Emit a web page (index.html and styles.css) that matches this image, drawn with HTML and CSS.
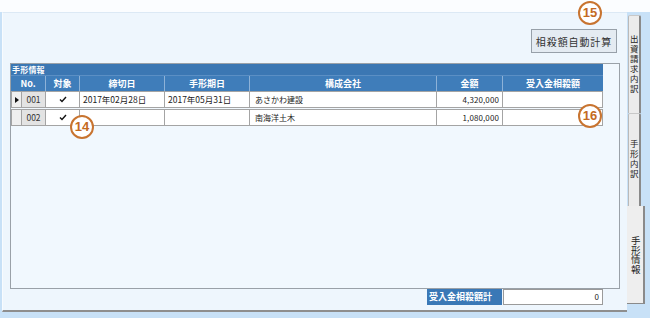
FILE: index.html
```html
<!DOCTYPE html>
<html lang="ja">
<head>
<meta charset="utf-8">
<link rel="stylesheet" href="styles.css">
</head>
<body>
<div class="top"></div>
<div class="window">
  <div class="panel">
    <div class="toolbar"><div class="btn">相殺額自動計算</div></div>
    <div class="frame">
      <div class="grid">
        <div class="caption">手形情報</div>
        <div class="hrow">
          <div class="hc w-no">No.</div>
          <div class="hc w-chk">対象</div>
          <div class="hc w-d">締切日</div>
          <div class="hc w-d">手形期日</div>
          <div class="hc w-co">構成会社</div>
          <div class="hc w-amt">金額</div>
          <div class="hc w-rcv last">受入金相殺額</div>
        </div>
        <div class="row">
          <div class="rh"><span class="arrow"></span></div>
          <div class="cell no">001</div>
          <div class="cell w-chk chk"><svg width="8" height="7" viewBox="0 0 8 7"><path d="M1 3.5 L3 5.5 L7 1" fill="none" stroke="#111" stroke-width="1.4"/></svg></div>
          <div class="cell w-d">2017年02月28日</div>
          <div class="cell w-d">2017年05月31日</div>
          <div class="cell w-co">あさかわ建設</div>
          <div class="cell w-amt num">4,320,000</div>
          <div class="cell w-rcv"></div>
        </div>
        <div class="row">
          <div class="rh"></div>
          <div class="cell no">002</div>
          <div class="cell w-chk chk"><svg width="8" height="7" viewBox="0 0 8 7"><path d="M1 3.5 L3 5.5 L7 1" fill="none" stroke="#111" stroke-width="1.4"/></svg></div>
          <div class="cell w-d"></div>
          <div class="cell w-d"></div>
          <div class="cell w-co">南海洋土木</div>
          <div class="cell w-amt num">1,080,000</div>
          <div class="cell w-rcv"></div>
        </div>
      </div>
    </div>
    <div class="totals">
      <div class="tlabel">受入金相殺額計</div>
      <div class="tinput">0</div>
    </div>
  </div>
  <div class="tabs">
    <div class="tab t1"><span class="tt">出資請求内訳</span></div>
    <div class="tab t2"><span class="tt">手形内訳</span></div>
    <div class="tab active"><span class="tt">手形情報</span></div>
  </div>
</div>
<div class="mark m14">14</div>
<div class="mark m15">15</div>
<div class="mark m16">16</div>
</body>
</html>
```
FILE: styles.css
```css
* { box-sizing: border-box; }
html, body { margin: 0; padding: 0; }
body {
  width: 650px;
  height: 318px;
  overflow: hidden;
  background: #fbfdff;
  font-family: "Noto Sans CJK JP", "Liberation Sans", sans-serif;
  position: relative;
}
.top { height: 12px; background: #fbfdff; }
.window {
  display: flex;
  height: 306px;
  background: #c8e1f7;
  padding: 0 5px 6px 2px;
}
.panel {
  width: 625px;
  height: 300px;
  background: #eef6fd;
  border-left: 1px solid #f8fbfe;
  border-top: 1px solid #dce9f5;
  border-bottom: 2px solid #8e8e8e;
  display: flex;
  flex-direction: column;
}
.toolbar {
  display: flex;
  justify-content: flex-end;
  padding: 16px 10px 0 0;
}
.btn {
  width: 86px;
  height: 24px;
  background: #e4ebf2;
  border: 1px solid #97a0a9;
  color: #333;
  font-size: 10px;
  letter-spacing: 0.9px;
  display: flex;
  align-items: center;
  justify-content: center;
}
.frame {
  margin: 10px 7px 0 7px;
  height: 226px;
  border: 1px solid #9aa1a8;
  background: #f1f8fe;
}
.grid { width: 592px; }
.caption {
  height: 11px;
  background: #3b77b3;
  color: #fff;
  font-size: 8px;
  font-weight: bold;
  line-height: 11px;
  padding-left: 1px;
  letter-spacing: 0.2px;
}
.hrow {
  display: flex;
  height: 16px;
  background: #3f7dba;
  border-top: 1px solid #5b8fc4;
}
.hc {
  color: #fff;
  font-size: 9px;
  font-weight: bold;
  text-align: center;
  line-height: 15px;
  border-right: 1px solid #8db2d8;
}
.hc.last { border-right: none; }
.w-no { width: 35px; }
.w-chk { width: 34px; }
.w-d { width: 85px; }
.w-co { width: 187px; }
.w-amt { width: 66px; }
.w-rcv { width: 100px; }
.row {
  display: flex;
  height: 17px;
  border-top: 1px solid #a4a4a4;
  border-bottom: 1px solid #a4a4a4;
  margin-bottom: 1px;
  background: #fff;
}
.rh {
  width: 11px;
  background: #efefef;
  border-left: 1px solid #a4a4a4;
  border-right: 1px solid #a4a4a4;
  display: flex;
  align-items: center;
  justify-content: center;
}
.arrow {
  width: 0;
  height: 0;
  border-left: 4px solid #111;
  border-top: 3px solid transparent;
  border-bottom: 3px solid transparent;
}
.cell {
  border-right: 1px solid #a4a4a4;
  font-size: 8.5px;
  color: #222;
  line-height: 15px;
  padding-left: 3px;
  white-space: nowrap;
  overflow: hidden;
}
.cell.no {
  width: 24px;
  background: #e3e3e3;
  text-align: center;
  padding-left: 0;
  color: #333;
}
.cell.chk {
  display: flex;
  align-items: center;
  justify-content: center;
  padding-left: 0;
}
.cell.w-co { padding-left: 5px; font-size: 8px; }
.cell.num {
  text-align: right;
  padding-left: 0;
  padding-right: 3px;
  font-size: 8px;
  letter-spacing: 0.1px;
}
.totals {
  display: flex;
  justify-content: flex-end;
  padding-right: 24px;
  height: 16px;
}
.tlabel {
  width: 75px;
  margin-right: 1px;
  background: #3a78b6;
  color: #fff;
  font-size: 9px;
  font-weight: bold;
  line-height: 16px;
  padding-left: 2px;
}
.tinput {
  width: 100px;
  background: #fff;
  border: 1px solid #9a9a9a;
  font-size: 8px;
  color: #222;
  text-align: right;
  line-height: 14px;
  padding-right: 3px;
}
.tabs {
  width: 18px;
  display: flex;
  flex-direction: column;
  align-items: flex-start;
  padding-top: 3px;
}
.tab {
  background: #ececec;
  color: #222;
  display: flex;
  align-items: center;
  justify-content: center;
}
.tt {
  writing-mode: vertical-rl;
  text-orientation: upright;
  white-space: nowrap;
  line-height: 1;
}
.t1, .t2 {
  margin-left: 1px;
  width: 13px;
  border-left: 1px solid #b9b9b9;
  border-right: 2px solid #8a8a8a;
  border-top: 1px solid #c8c8c8;
  border-radius: 2px 2px 0 0;
}
.t1 .tt, .t2 .tt {
  font-size: 8.5px;
  letter-spacing: 1.5px;
}
.t1 { height: 98px; }
.t2 { height: 93px; }
.active {
  width: 18px;
  height: 98px;
  border-right: 2px solid #8a8a8a;
  border-bottom: 1px solid #8a8a8a;
  background: #eeeeee;
}
.active .tt {
  font-size: 9.5px;
  letter-spacing: 0;
}
.mark {
  position: absolute;
  width: 24px;
  height: 24px;
  border: 2px solid #c87430;
  border-radius: 50%;
  background: #fff;
  color: #c46a22;
  font-family: "Liberation Sans", sans-serif;
  font-weight: bold;
  font-size: 13px;
  line-height: 20px;
  text-align: center;
}
.m14 { left: 70px; top: 115px; }
.m15 { left: 578px; top: 1px; }
.m16 { left: 578px; top: 104px; }
```
